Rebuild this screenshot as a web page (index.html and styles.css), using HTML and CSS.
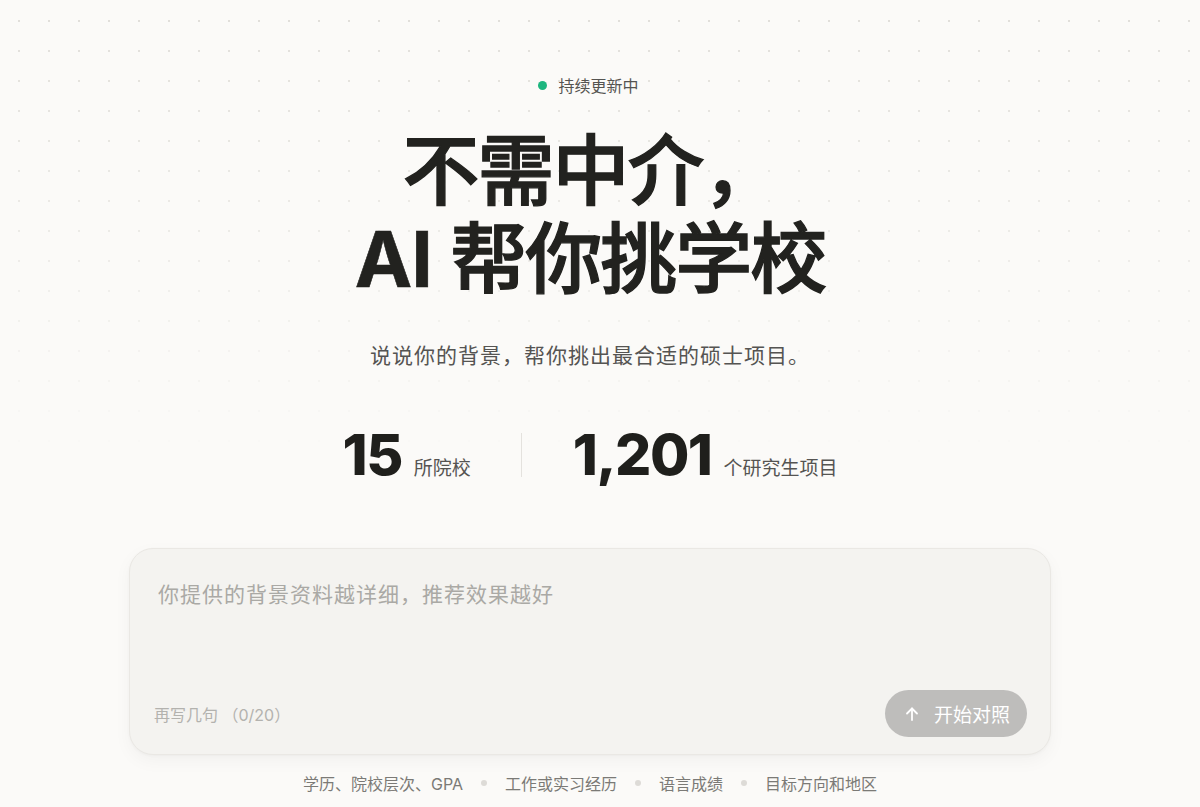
FILE: index.html
```html
<!DOCTYPE html>
<html lang="zh-CN">
<head>
<meta charset="utf-8">
<title>AI 帮你挑学校</title>
<link rel="stylesheet" href="styles.css">
</head>
<body>
<div class="page">
  <div class="dots"></div>
  <main class="hero">
    <div class="badge"><span class="badge-dot"></span><span>持续更新中</span></div>
    <h1 class="title"><span class="line">不需中介，</span><span class="line"><span class="latin">AI</span> 帮你挑学校</span></h1>
    <p class="subtitle">说说你的背景，帮你挑出最合适的硕士项目。</p>
    <div class="stats">
      <div class="stat"><span class="num">15</span><span class="label">所院校</span></div>
      <div class="divider"></div>
      <div class="stat"><span class="num">1,201</span><span class="label">个研究生项目</span></div>
    </div>
    <div class="composer">
      <textarea class="input" placeholder="你提供的背景资料越详细，推荐效果越好"></textarea>
      <div class="composer-bar">
        <span class="hint">再写几句 （0/20）</span>
        <button class="submit" type="button">
          <svg class="arrow" width="16" height="16" viewBox="0 0 16 16" fill="none" stroke="currentColor" stroke-width="1.8" stroke-linecap="round" stroke-linejoin="round"><path d="M8 14V2.5"/><path d="M3 7.5L8 2.5L13 7.5"/></svg>
          <span>开始对照</span>
        </button>
      </div>
    </div>
    <div class="tips">
      <span>学历、院校层次、GPA</span><i class="sep"></i>
      <span>工作或实习经历</span><i class="sep"></i>
      <span>语言成绩</span><i class="sep"></i>
      <span>目标方向和地区</span>
    </div>
  </main>
</div>
</body>
</html>
```

FILE: styles.css
```css
* { box-sizing: border-box; }
html, body { margin: 0; padding: 0; }
body {
  background: #fbfaf8;
  font-family: "Inter", "Noto Sans CJK SC", sans-serif;
  color: #222220;
  overflow: hidden;
}
.page {
  position: relative;
  width: 1200px;
  height: 807px;
}
.dots {
  position: absolute;
  left: 0; top: 0; right: 0;
  height: 520px;
  background-image: radial-gradient(circle at center, #e0ded9 1px, transparent 1.4px);
  background-size: 30px 30px;
  background-position: 4px 6px;
  -webkit-mask-image: linear-gradient(to bottom, #000 0%, rgba(0,0,0,0.6) 40%, transparent 90%);
  mask-image: linear-gradient(to bottom, #000 0%, rgba(0,0,0,0.6) 40%, transparent 90%);
  pointer-events: none;
}
.hero {
  position: relative;
  width: 1180px;
  display: flex;
  flex-direction: column;
  align-items: center;
  padding-top: 75px;
}
.badge {
  display: flex;
  align-items: center;
  gap: 11px;
  height: 20px;
  font-size: 16px;
  color: #555451;
  margin-left: -3px;
}
.badge-dot {
  width: 9px; height: 9px;
  border-radius: 50%;
  background: #1db67f;
}
.title {
  margin: 32px 0 0;
  font-family: "Inter", "Noto Sans CJK SC", sans-serif;
  font-weight: 500;
  -webkit-text-stroke: 1.3px #22221f;
  font-size: 77px;
  line-height: 88px;
  letter-spacing: -2px;
  text-align: center;
  color: #22221f;
  display: flex;
  flex-direction: column;
  align-items: center;
}
.title .line { display: block; white-space: nowrap; }
.title .latin { letter-spacing: -1px; font-weight: 700; -webkit-text-stroke: 0.6px #22221f; }
.subtitle {
  margin: 38px 0 0;
  font-size: 21px;
  line-height: 30px;
  letter-spacing: 1px;
  color: #555452;
}
.stats {
  margin-top: 54px;
  height: 60px;
  display: flex;
  align-items: center;
}
.stat {
  display: flex;
  align-items: baseline;
  gap: 12px;
}
.num {
  font-family: "Inter", sans-serif;
  font-weight: 800;
  font-size: 57px;
  line-height: 60px;
  letter-spacing: -1.5px;
  color: #1f1f1c;
}
.label {
  font-size: 19px;
  color: #555452;
}
.divider {
  width: 1px;
  height: 44px;
  background: #e4e2de;
  margin: 0 51px 0 50px;
}
.composer {
  margin-top: 63px;
  width: 922px;
  height: 207px;
  background: #f4f3f0;
  border: 1px solid #eae8e4;
  border-radius: 24px;
  box-shadow: 0 6px 18px rgba(0,0,0,0.04), 0 1px 3px rgba(0,0,0,0.03);
  display: flex;
  flex-direction: column;
  padding: 0 23px 17px 23px;
}
.input {
  flex: 1;
  border: none;
  outline: none;
  background: transparent;
  resize: none;
  font-family: "Inter", "Noto Sans CJK SC", sans-serif;
  font-size: 21px;
  line-height: 30px;
  letter-spacing: 1px;
  padding: 31px 5px 0;
  color: #333;
}
.input::placeholder { color: #aaa9a5; }
.composer-bar {
  display: flex;
  align-items: center;
  justify-content: space-between;
}
.hint {
  font-size: 16px;
  color: #b3b2ae;
  padding-left: 1px;
}
.submit {
  display: flex;
  align-items: center;
  gap: 14px;
  height: 47px;
  width: 142px;
  padding: 0 0 0 19px;
  border: none;
  border-radius: 24px;
  background: #bebdbb;
  color: #ffffff;
  font-family: "Inter", "Noto Sans CJK SC", sans-serif;
  font-size: 19px;
}
.arrow { flex: none; }
.tips {
  margin-top: 17px;
  height: 22px;
  display: flex;
  align-items: center;
  gap: 18px;
  font-size: 16px;
  color: #7b7a76;
}
.sep {
  width: 6px; height: 6px;
  border-radius: 50%;
  background: #dddbd7;
}
```
